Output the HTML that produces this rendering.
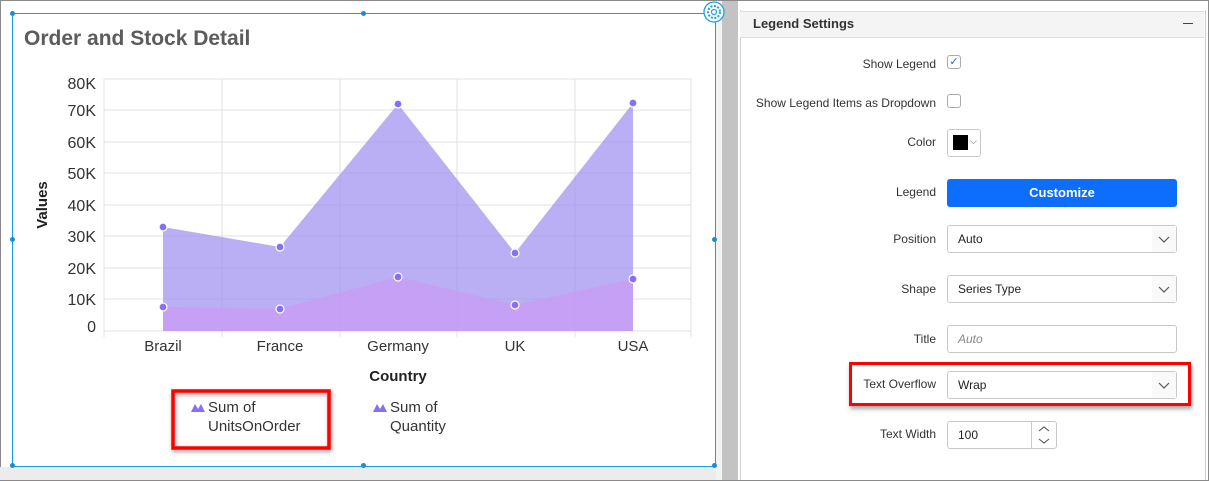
<!DOCTYPE html>
<html><head><style>
body{margin:0;width:1209px;height:481px;overflow:hidden;background:#fff;font-family:"Liberation Sans",Arial,sans-serif;position:relative}
.abs{position:absolute}
.lbl{position:absolute;right:0;font-size:12px;color:#333;text-align:right}
.inp{position:absolute;left:947px;width:230px;border:1px solid #c8c8c8;border-radius:3px;background:#fff;font-size:12px;color:#222;line-height:26px;box-sizing:border-box;padding-left:10px;height:28px}
.chev{position:absolute;right:0;top:0;width:24px;height:26px;background:#f9f9f9}
</style></head><body>
<div class="abs" style="left:0;top:0;width:1207px;height:479px;border:1px solid #8a8a8a"></div>
<div class="abs" style="left:0;top:467px;width:722px;height:13px;background:#ececec"></div>
<div class="abs" style="left:722px;top:1px;width:16px;height:479px;background:#c3c3c3"></div>
<div class="abs" style="left:716px;top:1px;width:6px;height:479px;background:#f3f3f3"></div>
<div class="abs" style="left:12px;top:13px;width:702px;height:452px;border:1px solid #1aa0e0"></div>
<div class="abs" style="left:10px;top:11px;width:5px;height:5px;border-radius:50%;background:#1a8fd0"></div>
<div class="abs" style="left:361px;top:11px;width:5px;height:5px;border-radius:50%;background:#1a8fd0"></div>
<div class="abs" style="left:10px;top:237px;width:5px;height:5px;border-radius:50%;background:#1a8fd0"></div>
<div class="abs" style="left:712px;top:237px;width:5px;height:5px;border-radius:50%;background:#1a8fd0"></div>
<div class="abs" style="left:10px;top:463px;width:5px;height:5px;border-radius:50%;background:#1a8fd0"></div>
<div class="abs" style="left:361px;top:463px;width:5px;height:5px;border-radius:50%;background:#1a8fd0"></div>
<div class="abs" style="left:712px;top:463px;width:5px;height:5px;border-radius:50%;background:#1a8fd0"></div>
<svg class="abs" style="left:703px;top:1px" width="22" height="22" viewBox="0 0 22 22"><circle cx="11" cy="11" r="10" fill="#fff" stroke="#1aa0e0" stroke-width="1.3"/><circle cx="11" cy="11" r="6" fill="none" stroke="#1aa0e0" stroke-width="2" stroke-dasharray="2 1.5"/><circle cx="11" cy="11" r="2.5" fill="none" stroke="#1aa0e0" stroke-width="1.2"/></svg>
<div class="abs" style="left:24px;top:27px;font-size:21px;font-weight:bold;color:#5c5c5c">Order and Stock Detail</div>
<svg class="abs" style="left:0;top:0" width="716" height="466">
<g stroke="#e0e0e0" stroke-width="1">
<line x1="104" y1="79" x2="691" y2="79"/><line x1="104" y1="110" x2="691" y2="110"/><line x1="104" y1="142" x2="691" y2="142"/><line x1="104" y1="173" x2="691" y2="173"/><line x1="104" y1="205" x2="691" y2="205"/><line x1="104" y1="236" x2="691" y2="236"/><line x1="104" y1="268" x2="691" y2="268"/><line x1="104" y1="299" x2="691" y2="299"/>
<line x1="222" y1="79" x2="222" y2="331"/><line x1="340" y1="79" x2="340" y2="331"/><line x1="457" y1="79" x2="457" y2="331"/><line x1="575" y1="79" x2="575" y2="331"/><line x1="691" y1="79" x2="691" y2="331"/>
<line x1="104" y1="79" x2="104" y2="337"/><line x1="104" y1="331" x2="691" y2="331"/>
<line x1="222" y1="331" x2="222" y2="337"/><line x1="340" y1="331" x2="340" y2="337"/><line x1="457" y1="331" x2="457" y2="337"/><line x1="575" y1="331" x2="575" y2="337"/><line x1="691" y1="331" x2="691" y2="337"/>
</g>
<polygon points="163,227 280,247 398,104 515,253 633,103 633,331 163,331" fill="#9f8ff0" fill-opacity="0.72"/>
<polygon points="163,307 280,309 398,277 515,305 633,279 633,331 163,331" fill="#c89cf5" fill-opacity="0.8"/>
<g fill="#8a6ff5" stroke="#fff" stroke-width="1.2">
<circle cx="163" cy="227" r="4"/><circle cx="280" cy="247" r="4"/><circle cx="398" cy="104" r="4"/><circle cx="515" cy="253" r="4"/><circle cx="633" cy="103" r="4"/>
<circle cx="163" cy="307" r="4"/><circle cx="280" cy="309" r="4"/><circle cx="398" cy="277" r="4"/><circle cx="515" cy="305" r="4"/><circle cx="633" cy="279" r="4"/>
</g>
<g font-family="Liberation Sans" font-size="16" fill="#333" text-anchor="end">
<text x="96" y="89">80K</text><text x="96" y="116">70K</text><text x="96" y="148">60K</text><text x="96" y="179">50K</text><text x="96" y="211">40K</text><text x="96" y="242">30K</text><text x="96" y="274">20K</text><text x="96" y="305">10K</text><text x="96" y="332">0</text>
</g>
<g font-family="Liberation Sans" font-size="15" fill="#333" text-anchor="middle">
<text x="163" y="351">Brazil</text><text x="280" y="351">France</text><text x="398" y="351">Germany</text><text x="515" y="351">UK</text><text x="633" y="351">USA</text>
</g>
<text x="398" y="381" font-family="Liberation Sans" font-size="15" font-weight="bold" fill="#222" text-anchor="middle">Country</text>
<text transform="translate(47,205) rotate(-90)" font-family="Liberation Sans" font-size="15" font-weight="bold" fill="#222" text-anchor="middle">Values</text>
<path d="M191,412 L195,404 L198,409 L201,404 L205,412Z" fill="#8a6ff5"/>
<path d="M373,412 L377,404 L380,409 L383,404 L387,412Z" fill="#8a6ff5"/>
<g font-family="Liberation Sans" font-size="15" fill="#333">
<text x="208" y="412">Sum of</text><text x="208" y="431">UnitsOnOrder</text>
<text x="390" y="412">Sum of</text><text x="390" y="431">Quantity</text>
</g>
<rect x="173" y="391" width="156" height="57" fill="none" stroke="#f00" stroke-width="3.5" style="filter:drop-shadow(1px 2px 2px rgba(0,0,0,.4))"/>
</svg>
<div class="abs" style="left:740px;top:10px;width:464px;height:470px;border-left:1px solid #ccc;border-right:1px solid #ccc;background:#fff"></div>
<div class="abs" style="left:740px;top:11px;width:464px;height:25px;background:#f4f4f4;border-top:1px solid #ddd;border-bottom:1px solid #ddd"></div>
<div class="abs" style="left:753px;top:16px;font-size:13px;font-weight:bold;color:#333">Legend Settings</div>
<div class="abs" style="left:1183px;top:23px;width:10px;height:1px;background:#444"></div>
<div class="abs" style="left:740px;top:0;width:196px;height:480px">
<div class="lbl" style="top:57px">Show Legend</div>
<div class="lbl" style="top:96px">Show Legend Items as Dropdown</div>
<div class="lbl" style="top:135px">Color</div>
<div class="lbl" style="top:185px">Legend</div>
<div class="lbl" style="top:232px">Position</div>
<div class="lbl" style="top:282px">Shape</div>
<div class="lbl" style="top:332px">Title</div>
<div class="lbl" style="top:377px">Text Overflow</div>
<div class="lbl" style="top:427px">Text Width</div>
</div>
<div class="abs" style="left:947px;top:55px;width:12px;height:12px;border:1px solid #aaa;border-radius:3px;color:#2563eb;font-size:11px;line-height:12px;text-align:center">✓</div>
<div class="abs" style="left:947px;top:94px;width:12px;height:12px;border:1px solid #aaa;border-radius:3px"></div>
<div class="abs" style="left:947px;top:129px;width:32px;height:26px;border:1px solid #c8c8c8;border-radius:3px"><div style="position:absolute;left:5px;top:5px;width:15px;height:15px;background:#000"></div><div style="position:absolute;left:22px;top:6px;font-size:9px;color:#555">⌵</div></div>
<div class="abs" style="left:947px;top:179px;width:230px;height:28px;background:#0d6efd;border-radius:3px;color:#fff;font-weight:bold;font-size:13px;line-height:28px;text-align:center">Customize</div>
<div class="inp" style="top:225px">Auto<div class="chev"><svg width="24" height="26"><path d="M7,11 L12,16 L17,11" fill="none" stroke="#555" stroke-width="1.2"/></svg></div></div>
<div class="inp" style="top:275px">Series Type<div class="chev"><svg width="24" height="26"><path d="M7,11 L12,16 L17,11" fill="none" stroke="#555" stroke-width="1.2"/></svg></div></div>
<div class="inp" style="top:325px;color:#888;font-style:italic">Auto</div>
<div class="inp" style="top:371px">Wrap<div class="chev"><svg width="24" height="26"><path d="M7,11 L12,16 L17,11" fill="none" stroke="#555" stroke-width="1.2"/></svg></div></div>
<div class="abs" style="left:849px;top:362px;width:342px;height:44px;border:3.5px solid #f00;box-sizing:border-box;box-shadow:1px 3px 4px rgba(0,0,0,.35)"></div>
<div class="inp" style="top:421px;width:110px">100<div style="position:absolute;right:0;top:0;width:24px;height:26px;border-left:1px solid #ccc"><svg width="24" height="26"><path d="M7,9 L12,5 L17,9 M7,17 L12,21 L17,17" fill="none" stroke="#555" stroke-width="1.1"/></svg></div></div>
</body></html>
